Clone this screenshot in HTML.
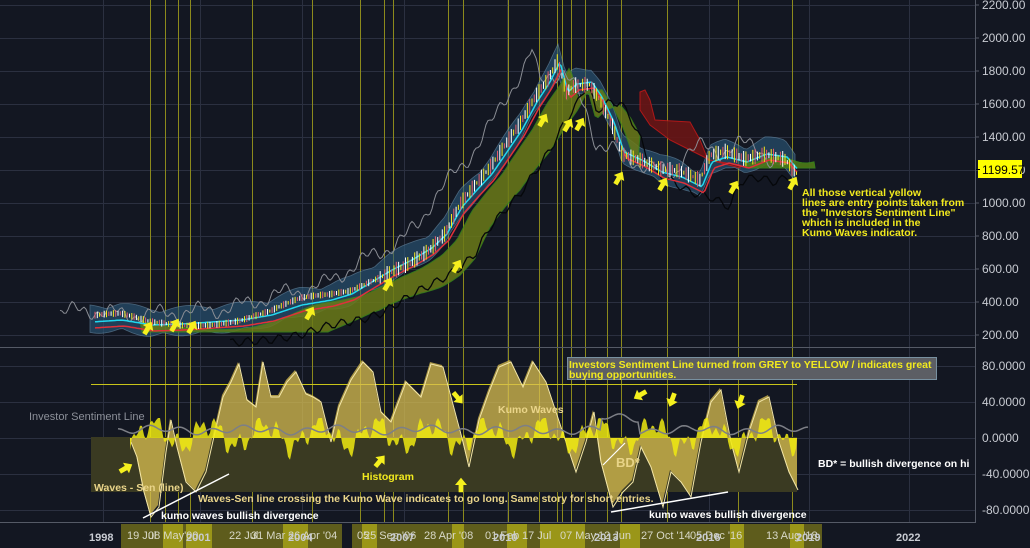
<!DOCTYPE html>
<html><head><meta charset="utf-8"><style>
html,body{margin:0;padding:0;background:#131722;}
body{width:1030px;height:548px;overflow:hidden;position:relative;font-family:"Liberation Sans",Tahoma,sans-serif;}
svg{position:absolute;left:0;top:0}
text{font-family:"Liberation Sans",sans-serif;}
</style></head><body>
<svg id="s" width="1030" height="548" viewBox="0 0 1030 548">
<rect width="1030" height="548" fill="#131722"/>
<g id="grid" stroke="#2b3040" stroke-width="1"></g>
<g id="ylines" stroke="#8c8a1c" stroke-width="1"></g>
<g id="upper"></g>
<g id="lower"></g>
<line x1="0" y1="347.5" x2="975" y2="347.5" stroke="#555a66"/>
<line x1="975.5" y1="0" x2="975.5" y2="523" stroke="#555a66"/>
<line x1="0" y1="522.5" x2="975" y2="522.5" stroke="#555a66"/>
<g id="axis" fill="#c8cbd2" font-size="12"></g>
<g id="dates"></g>
<rect x="978" y="160" width="44" height="18" fill="#ffff00"/>
<line x1="976" y1="169.5" x2="980" y2="169.5" stroke="#000"/>
<text x="982" y="174" font-size="12" fill="#000">1199.57</text>
<g fill="#f2ea1e" font-size="10.5" font-weight="bold">
<text x="802" y="196">All those vertical yellow</text>
<text x="802" y="206">lines are entry points taken from</text>
<text x="802" y="216">the "Investors Sentiment Line"</text>
<text x="802" y="226">which is included in the</text>
<text x="802" y="236">Kumo Waves indicator.</text>
</g>
<rect x="567.5" y="357.5" width="369" height="22" fill="#5c5e64" stroke="#7890a0"/>
<g fill="#f2ea1e" font-size="10.5" font-weight="bold">
<text x="569" y="368">Investors Sentiment Line turned from GREY to YELLOW / indicates great</text>
<text x="569" y="378">buying opportunities.</text>
</g>
<text x="29" y="420" font-size="11" fill="#8c9099">Investor Sentiment Line</text>
<text x="498" y="413" font-size="10.5" font-weight="bold" fill="#ead58a">Kumo Waves</text>
<text x="362" y="480" font-size="10.5" font-weight="bold" fill="#f2ea1e">Histogram</text>
<text x="94" y="491" font-size="10.5" font-weight="bold" fill="#ead58a">Waves - Sen (line)</text>
<text x="198" y="502" font-size="10.5" font-weight="bold" fill="#ead58a">Waves-Sen line crossing the Kumo Wave indicates to go long. Same story for short entries.</text>
<text x="161" y="519" font-size="10.5" font-weight="bold" fill="#ffffff">kumo waves bullish divergence</text>
<text x="649" y="518" font-size="10.5" font-weight="bold" fill="#ffffff">kumo waves bullish divergence</text>
<text x="616" y="467" font-size="13" font-weight="bold" fill="#e8d488">BD*</text>
<text x="818" y="467" font-size="10.5" font-weight="bold" fill="#ffffff">BD* = bullish divergence on hi</text>
<line x1="143" y1="518" x2="229" y2="474" stroke="#fff" stroke-width="1.5"/>
<line x1="611" y1="512" x2="728" y2="492" stroke="#fff" stroke-width="1.5"/>
<line x1="603" y1="465" x2="625" y2="443" stroke="#fff" stroke-width="1.2"/>
<g id="arrows" fill="#f5f01e"></g>
</svg>
<script>
const NS="http://www.w3.org/2000/svg";
function el(p,t,a,txt){const e=document.createElementNS(NS,t);for(const k in a)e.setAttribute(k,a[k]);if(txt!==undefined)e.textContent=txt;document.getElementById(p).appendChild(e);return e;}
const gx=[103,200,302,404,507,607,709,809,909];
gx.forEach(x=>el('grid','line',{x1:x+.5,y1:0,x2:x+.5,y2:523}));
for(let p=200;p<=2200;p+=200){const y=Math.round(335-(p-200)*0.165)+.5;el('grid','line',{x1:0,y1:y,x2:975,y2:y});}
[366,402,438,474,510].forEach(y=>el('grid','line',{x1:0,y1:y+.5,x2:975,y2:y+.5}));
[150,165,178,190,252,312,360,384,393,448,463,508,539,557,562,571,585,607,621,667,738,792].forEach(x=>el('ylines','line',{x1:x+.5,y1:0,x2:x+.5,y2:523}));
for(let p=200;p<=2200;p+=200){const y=335-(p-200)*0.165;el('axis','text',{x:982,y:y+4},p.toFixed(2));el('axis','line',{x1:975,y1:y,x2:979,y2:y,stroke:'#555a66'});}
[[80,366],[40,402],[0,438],[-40,474],[-80,510]].forEach(([v,y])=>{el('axis','text',{x:982,y:y+4},v+'.0000');});
const P=[[60,318],[90,320],[120,318],[150,323],[180,322],[210,320],[240,318],[270,313],[300,303],[330,298],[350,292],[370,280],[390,268],[410,258],[430,246],[445,232],[460,205],[475,188],[490,172],[505,150],[520,128],[535,100],[548,80],[558,60],[566,90],[575,82],[590,80],[600,95],[612,120],[622,150],[640,158],[660,170],[680,175],[700,185],[710,160],[725,155],[745,160],[765,152],[785,155],[798,170]];
function interp(x){if(x<P[0][0])return P[0][1];for(let i=0;i<P.length-1;i++){if(x>=P[i][0]&&x<=P[i+1][0]){const t=(x-P[i][0])/(P[i+1][0]-P[i][0]);return P[i][1]+t*(P[i+1][1]-P[i][1]);}}return P[P.length-1][1];}
function path(f,x0,x1,st){let d='';for(let x=x0;x<=x1;x+=st)d+=(d?'L':'M')+x+' '+f(x).toFixed(1);return d;}
function band(f,g,x0,x1,st){let d='';for(let x=x0;x<=x1;x+=st)d+=(d?'L':'M')+x+' '+f(x).toFixed(1);for(let x=x1;x>=x0;x-=st)d+='L'+x+' '+g(x).toFixed(1);return d+'Z';}
el('upper','path',{d:band(x=>interp(x)-10-6*Math.abs(Math.sin(x/17)),x=>interp(x)+10+4*Math.abs(Math.sin(x/13)),90,795,3),fill:'#2b5a7c',opacity:.6,stroke:'#6f9ab8','stroke-width':.8});
const cl=y=>Math.min(y,332);
const cA=x=>cl(interp(x-12)+6+4*Math.sin(x/30)), cB=x=>cl(interp(x-30)+24+6*Math.sin(x/22));
el('upper','path',{d:band(cA,cB,140,640,3),fill:'#6b7a18',opacity:.85,stroke:'#3c8a1a','stroke-width':1});
el('upper','path',{d:'M640 92 L645 90 L650 100 L655 120 L690 122 L700 140 L708 160 L740 165 L740 168 L710 160 L690 150 L670 140 L650 125 L640 110Z',fill:'#6a1515',opacity:.9,stroke:'#c01818','stroke-width':1});
el('upper','path',{d:band(x=>160+3*Math.sin(x/9),x=>168,745,815,3),fill:'#4e7a18',opacity:.9,stroke:'#3c8a1a'});
el('upper','path',{d:path(x=>interp(x+26)-8+4*Math.sin(x*.5)+6*Math.sin(x*.15),60,775,2),fill:'none',stroke:'#8a8d94','stroke-width':1});
el('upper','path',{d:path(x=>interp(x-30)+22+4*Math.sin(x*.4),230,790,3),fill:'none',stroke:'#05070a','stroke-width':1.3});
el('upper','path',{d:path(x=>interp(x-4)+8,95,798,2),fill:'none',stroke:'#e0303a','stroke-width':1.5});
el('upper','path',{d:path(x=>interp(x-2)+2,95,798,2),fill:'none',stroke:'#22d8f0','stroke-width':1.5});
for(let x=95;x<798;x+=2.3){const y=interp(x)+5*Math.sin(x*2.7);const h=3+Math.abs(8*Math.sin(x*1.7))*(x>380?1.6:0.5);el('upper','line',{x1:x,y1:y-h/2,x2:x,y2:y+h/2,stroke:['#ffffff','#f6e61e','#e65a6a'][Math.floor(x*7)%3],'stroke-width':1});}
el('lower','rect',{x:91,y:437,width:706,height:55,fill:'#3a3a22'});
el('lower','line',{x1:91,y1:384.5,x2:797,y2:384.5,stroke:'#c8c41a'});
const K=[[130,440],[136,455],[143,490],[150,515],[158,505],[165,450],[170,418],[176,445],[185,480],[195,490],[205,470],[214,430],[222,395],[230,380],[238,362],[246,398],[255,405],[262,360],[270,395],[278,395],[286,380],[295,370],[305,392],[312,395],[320,400],[330,440],[338,405],[350,378],[362,360],[372,370],[380,410],[390,420],[405,380],[420,395],[430,362],[442,365],[450,395],[462,440],[468,465],[478,418],[488,390],[498,365],[510,360],[522,385],[532,360],[545,380],[555,410],[565,440],[575,470],[585,440],[593,410],[600,460],[612,505],[622,490],[632,480],[640,445],[650,465],[662,505],[670,470],[680,480],[690,495],[700,440],[710,400],[720,388],[730,440],[738,470],[748,430],[758,400],[768,395],[778,440],[788,470],[797,488]];
let d='M130 438';K.forEach(p=>d+='L'+p[0]+' '+p[1]);d+='L797 438Z';
el('lower','path',{d:d,fill:'#d9bf50',opacity:.75});
let d2='';K.forEach((p,i)=>d2+=(i?'L':'M')+(p[0]+1)+' '+(p[1]+2));
el('lower','path',{d:d2,fill:'none',stroke:'#f3e6a8','stroke-width':1});
let h='M130 438';for(let x=130;x<=797;x+=2){const v=8*Math.sin(x*.31)+12*Math.sin(x*.113)+6*Math.sin(x*.7)-3;h+='L'+x+' '+(438+Math.max(-20,Math.min(25,v))).toFixed(1);}h+='L797 438Z';
el('lower','path',{d:h,fill:'#f0ea10',opacity:.85});
el('lower','path',{d:path(x=>430+3*Math.sin(x*.2)+2*Math.sin(x*.07)-(x>600&&x<640?12:0),118,808,2),fill:'none',stroke:'#7d7f86','stroke-width':1.5});
el('dates','rect',{x:121,y:524,width:221,height:24,fill:'#5e5c1c'});
el('dates','rect',{x:352,y:524,width:470,height:24,fill:'#5e5c1c'});
[[163,20],[186,26],[283,25],[362,15],[452,12],[507,20],[540,40],[575,10],[620,20],[730,14],[790,14]].forEach(([x,w])=>el('dates','rect',{x:x,y:524,width:w,height:24,fill:'#9a9618'}));
const dl=[[127,'19 Jul'],[148,'08 May\'00'],[229,'22 Jul'],[251,'31 Mar'],[288,'26 Apr \'04'],[357,'05'],[364,'25 Sep \'06'],[424,'28 Apr \'08'],[485,'01 Feb'],[522,'17 Jul'],[560,'07 May'],[598,'12 Jun'],[641,'27 Oct \'14'],[690,'05 Dec \'16'],[766,'13 Aug \'18']];
dl.forEach(([x,t])=>el('dates','text',{x:x,y:539,'font-size':11,fill:'#d8d8c8'},t));
[[89,'1998'],[186,'2001'],[288,'2004'],[390,'2007'],[493,'2010'],[594,'2013'],[696,'2016'],[796,'2019'],[896,'2022']].forEach(([x,t])=>el('dates','text',{x:x,y:541,'font-size':11,'font-weight':'bold',fill:'#c8cbd2'},t));
function arr(x,y,a){el('arrows','path',{d:'M0 -6 L5 0 L2 0 L2 6 L-2 6 L-2 0 L-5 0Z',transform:`translate(${x},${y}) rotate(${a}) scale(1.2)`});}
[[148,328,30],[175,325,30],[192,327,30],[310,313,30],[388,284,30],[457,266,30],[543,120,30],[568,125,30],[580,124,30],[619,178,30],[663,184,30],[734,187,30],[793,183,30],[126,468,60],[380,461,40],[461,485,0],[640,395,-120],[672,400,-160],[740,402,-160],[458,398,140]].forEach(a=>arr(...a));
</script>
</body></html>
